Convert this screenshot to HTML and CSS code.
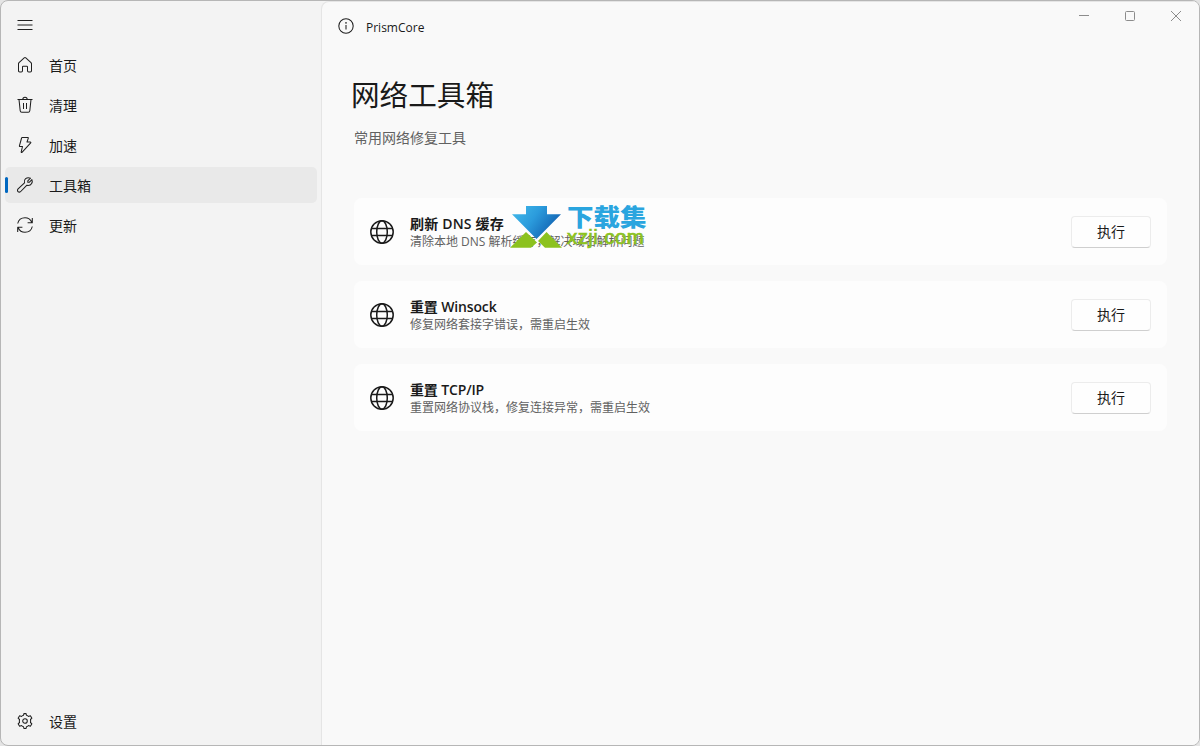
FILE: index.html
```html
<!DOCTYPE html>
<html lang="zh-CN">
<head>
  <meta charset="UTF-8">
  <meta name="viewport" content="width=device-width, initial-scale=1.0">
  <title>PrismCore</title>
  <link rel="stylesheet" href="styles.css">
</head>
<body>

<div class="window">
  <!-- Sidebar -->
  <nav class="sidebar">
    <button class="nav-item menu">
      <svg class="icon" viewBox="0 0 16 16"><path d="M.5 3.5h15M.5 8h15M.5 12.5h15"/></svg>
    </button>
    <a class="nav-item">
      <svg class="icon" viewBox="0 0 16 16"><path d="M1.500 6.800c0-.5.2-.9.5-1.200L7.200.9c.5-.4 1.100-.4 1.600 0L14 5.600c.3.300.5.700.5 1.200v7c0 .7-.5 1.200-1.200 1.200h-1.600c-.7 0-1.200-.5-1.200-1.200V10c0-.5-.3-.8-.8-.8H6.300c-.5 0-.8.300-.8.8v3.800c0 .7-.5 1.200-1.200 1.200H2.700c-.7 0-1.200-.5-1.200-1.200z"/></svg>
      <span>首页</span>
    </a>
    <a class="nav-item">
      <svg class="icon" viewBox="0 0 16 16"><path d="M.5 2.500h15M5.800 2.500C5.800 1 6.700.3 8 .3s2.200.7 2.200 2.200M2 2.500l1.200 11.300c.1.900.7 1.500 1.600 1.500h6.400c.9 0 1.500-.6 1.600-1.500L14 2.500M6.500 6v6M9.500 6v6"/></svg>
      <span>清理</span>
    </a>
    <a class="nav-item">
      <svg class="icon" viewBox="0 0 16 16"><path d="M5.200.5h5.600c.4 0 .6.300.5.600L10 5h3.300c.5 0 .7.500.4.900L5 15.300c-.4.400-.9.100-.8-.4L5.500 9.500H3c-.4 0-.7-.3-.6-.7L4.600 1c.1-.3.300-.5.600-.5z"/></svg>
      <span>加速</span>
    </a>
    <a class="nav-item active">
      <svg class="icon" viewBox="0 0 16 16"><path d="M13.500 1.200l-2.700 2.700v1.400h1.400l2.700-2.700c1.100 2.600-.5 5.800-3.700 5.900-.6 0-1-.1-1.500-.2l-6 6.200c-.8.800-2 .8-2.700.1s-.7-1.900.1-2.700l6.400-6.100C6.400 2.600 9.600-.4 13.500 1.200z"/></svg>
      <span>工具箱</span>
    </a>
    <a class="nav-item">
      <svg class="icon" viewBox="0 0 16 16"><path d="M.7 6.500C1.500 3 4.400.7 8 .7c3 0 5.600 1.700 6.800 4.600M15.300 1v4.700h-4.700M15.300 9.500c-.8 3.500-3.700 5.800-7.300 5.800-3 0-5.600-1.700-6.800-4.600M.7 15v-4.700h4.700"/></svg>
      <span>更新</span>
    </a>
    <a class="nav-item settings">
      <svg class="icon" viewBox="0 0 16 16"><path d="M6.500 2.300L6.900.6h2.200l.4 1.700c.7.200 1.300.6 1.900 1.100l2-.6 1.500 2.400-1.400 1.300c.2 1 .2 2 0 3l1.400 1.300-1.500 2.400-2-.6c-.6.500-1.200.9-1.900 1.100l-.4 1.700H6.900l-.4-1.700c-.7-.2-1.300-.6-1.900-1.100l-2 .6-1.500-2.400 1.400-1.300c-.2-1-.2-2 0-3L1.100 5.200l1.500-2.400 2 .6c.6-.5 1.200-.9 1.900-1.100z"/><circle cx="8" cy="8" r="2.300"/></svg>
      <span>设置</span>
    </a>
  </nav>

  <!-- Main area -->
  <main class="content">
    <header class="titlebar">
      <svg class="icon" viewBox="0 0 16 16"><circle cx="8" cy="8" r="7.200"/><path d="M8 7v4.500"/><circle class="dot" cx="8" cy="4.900" r=".8"/></svg>
      <span class="app-name">PrismCore</span>
      <div class="window-controls">
        <svg viewBox="0 0 12 12"><path d="M1 5.500h10"/></svg>
        <svg viewBox="0 0 12 12"><rect x="1.500" y="1.500" width="9" height="9" rx="1"/></svg>
        <svg viewBox="0 0 12 12"><path d="M1 1l10 10M11 1L1 11"/></svg>
      </div>
    </header>

    <h1>网络工具箱</h1>
    <p class="subtitle">常用网络修复工具</p>

    <div class="tools">
      <section class="card">
        <svg class="globe" viewBox="0 0 24 24"><circle cx="12" cy="12" r="11.200"/><ellipse cx="12" cy="12" rx="5.300" ry="11.200"/><path d="M1.600 8.500h20.800M1.600 15.500h20.800"/></svg>
        <div class="card-text">
          <h2 class="wide">刷新 DNS 缓存</h2>
          <p>清除本地 DNS 解析缓存，解决域名解析问题</p>
        </div>
        <button class="run">执行</button>
        <!-- Site mark lying over the card -->
        <div class="watermark">
          <svg viewBox="0 0 52 42">
            <defs>
              <linearGradient id="arrow" x1="0" y1="0" x2="1" y2=".5">
                <stop offset="0" stop-color="#45bdec"/>
                <stop offset=".5" stop-color="#2b9bdc"/>
                <stop offset="1" stop-color="#1160b0"/>
              </linearGradient>
            </defs>
            <path fill="url(#arrow)" d="M16 0h21v8.200h14L26.500 33 2 8.200h14z"/>
            <path fill="#8cc21f" d="M0 41.700L16 26l8 7.500 3 3-6 5.200zM28 35l8.500-9L52 41.700H35z"/>
          </svg>
          <div class="mark-text">
            <span class="mark-name">下载集</span>
            <span class="mark-site">xzji.com</span>
          </div>
        </div>
      </section>
      <section class="card">
        <svg class="globe" viewBox="0 0 24 24"><circle cx="12" cy="12" r="11.200"/><ellipse cx="12" cy="12" rx="5.300" ry="11.200"/><path d="M1.600 8.500h20.800M1.600 15.500h20.800"/></svg>
        <div class="card-text">
          <h2>重置 Winsock</h2>
          <p>修复网络套接字错误，需重启生效</p>
        </div>
        <button class="run">执行</button>
      </section>
      <section class="card">
        <svg class="globe" viewBox="0 0 24 24"><circle cx="12" cy="12" r="11.200"/><ellipse cx="12" cy="12" rx="5.300" ry="11.200"/><path d="M1.600 8.500h20.800M1.600 15.500h20.800"/></svg>
        <div class="card-text">
          <h2>重置 TCP/IP</h2>
          <p>重置网络协议栈，修复连接异常，需重启生效</p>
        </div>
        <button class="run">执行</button>
      </section>
    </div>
  </main>
</div>

</body>
</html>
```

FILE: styles.css
```css
/* Basic Styles */
* {
  box-sizing: border-box;
}
body {
  margin: 0;
  background-color: #e4e4e4;
  color: #1a1a1a;
  font-family: "Open Sans", "Noto Sans CJK SC", sans-serif;
  font-size: 14px;
}
h1, h2, p {
  margin: 0;
  font-weight: normal;
}
button {
  font-family: inherit;
  font-size: inherit;
  color: inherit;
}
.window {
  display: flex;
  height: 746px;
  border: 1px solid #b6b6b6;
  border-radius: 8px;
  background-color: #f3f3f3;
  overflow: hidden;
}
.icon {
  width: 16px;
  height: 16px;
  flex: none;
  fill: none;
  stroke: #1f1f1f;
  stroke-width: 1.05;
  stroke-linejoin: round;
  overflow: visible;
}

/* Sidebar */
.sidebar {
  width: 320px;
  flex: none;
  display: flex;
  flex-direction: column;
  gap: 4px;
  padding: 6px 4px 6px;
}
.nav-item {
  position: relative;
  display: flex;
  align-items: center;
  gap: 16px;
  height: 36px;
  padding: 0 12px;
  border: none;
  border-radius: 5px;
  background: none;
  line-height: 20px;
}
.nav-item span {
  padding-top: 2px;
}
.menu {
  width: 40px;
}
.active {
  background-color: #e9e9e9;
}
.active::before {
  content: "";
  position: absolute;
  left: 0;
  top: 10px;
  width: 3px;
  height: 16px;
  border-radius: 2px;
  background-color: #0067c0;
}
.settings {
  margin-top: auto;
}

/* Main area */
.content {
  flex: 1;
  background-color: #f9f9f9;
  border: 1px solid #e5e5e5;
  border-width: 1px 0 0 1px;
  border-top-left-radius: 8px;
}
.titlebar {
  display: flex;
  align-items: center;
  height: 48px;
  padding-left: 16px;
}
.titlebar .dot {
  fill: #1f1f1f;
  stroke: none;
}
.app-name {
  margin-left: 12px;
  padding-top: 3px;
  font-size: 12px;
}
.window-controls {
  display: flex;
  align-self: flex-start;
  gap: 34px;
  margin-left: auto;
  padding: 8px 17px 0 0;
}
.window-controls svg {
  width: 12px;
  height: 12px;
  fill: none;
  stroke: #8c8c8c;
}
h1 {
  padding: 25px 0 0 29px;
  font-size: 28.600px;
  line-height: 40px;
}
.subtitle {
  padding: 13px 0 0 32px;
  line-height: 20px;
  color: #616161;
}

/* Tool cards */
.tools {
  display: flex;
  flex-direction: column;
  gap: 16px;
  padding: 50px 32px 0;
}
.card {
  position: relative;
  display: flex;
  align-items: center;
  height: 67px;
  padding: 0 16px;
  border-radius: 8px;
  background-color: #fdfdfd;
}
.globe {
  width: 24px;
  height: 24px;
  fill: none;
  stroke: #1a1a1a;
  stroke-width: 1.500;
}
.card-text {
  margin-left: 16px;
}
.card h2 {
  font-size: 14px;
  font-weight: 600;
  line-height: 18px;
  letter-spacing: -0.15px;
}
.card h2.wide {
  letter-spacing: 0.2px;
}
.card p {
  padding-top: 1px;
  margin-bottom: -1px;
  font-size: 12px;
  line-height: 16px;
  color: #616161;
}
.run {
  width: 80px;
  height: 32px;
  margin-left: auto;
  padding: 0 0 2px;
  border: 1px solid #ececec;
  border-bottom-color: #cfcfcf;
  border-radius: 4px;
  background-color: #fefefe;
}

/* Watermark */
.watermark {
  position: absolute;
  left: 156px;
  top: 8px;
  display: flex;
  gap: 5px;
}
.watermark svg {
  width: 52px;
  height: 42px;
}
.mark-text {
  display: flex;
  flex-direction: column;
}
.mark-name {
  font-size: 26.500px;
  font-weight: 900;
  line-height: 23px;
  color: #2aa5df;
  transform: scaleY(0.88);
}
.mark-site {
  font-family: "Liberation Sans", sans-serif;
  font-size: 20.500px;
  line-height: 16px;
  letter-spacing: 0.4px;
  color: #8cc21f;
  -webkit-text-stroke: 0.7px #8cc21f;
}
```
